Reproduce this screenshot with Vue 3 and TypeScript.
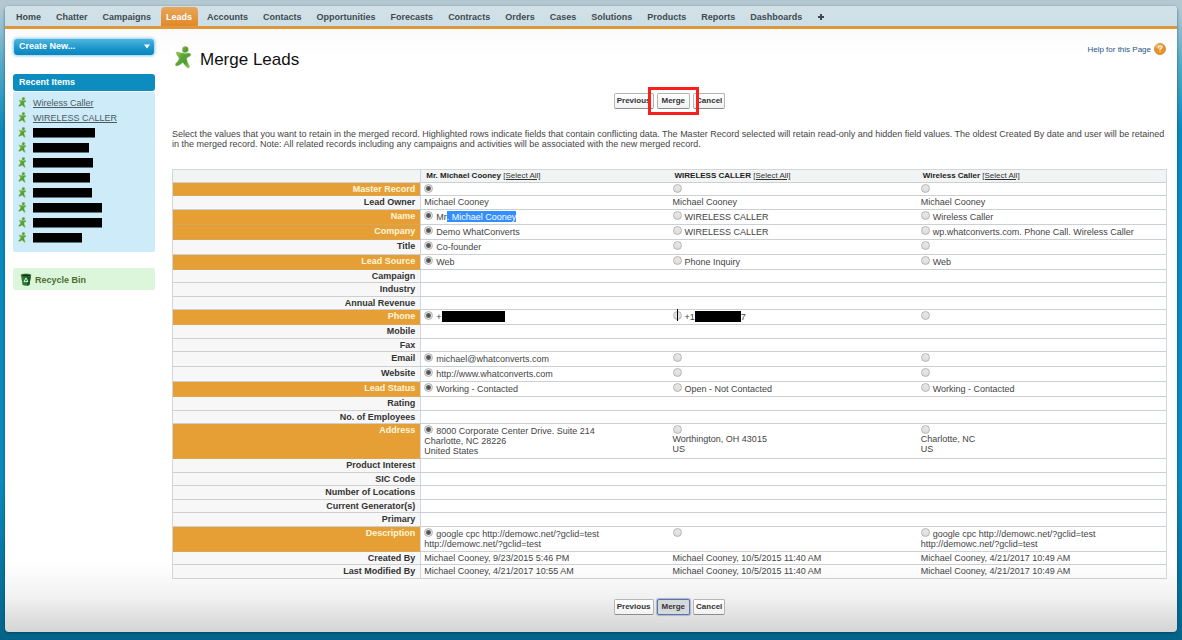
<script setup lang="ts">
import { ref } from 'vue'

type RowSize = 'short' | 'medium' | 'choice' | 'address' | 'description'

interface Cell {
  radio?: boolean
  first?: string
  lines?: string[]
  selected?: string
  barWidth?: number
  tail?: string
  caret?: boolean
}

interface Row {
  label: string
  size: RowSize
  conflict?: boolean
  cells: Cell[]
}

const tabs = [
  'Home', 'Chatter', 'Campaigns', 'Leads', 'Accounts', 'Contacts', 'Opportunities', 'Forecasts',
  'Contracts', 'Orders', 'Cases', 'Solutions', 'Products', 'Reports', 'Dashboards',
]
const activeTab = 'Leads'

const recent = ['Wireless Caller', 'WIRELESS CALLER']
const hiddenRecent = [62, 56, 60, 57, 59, 69, 69, 49]

const records = ['Mr. Michael Cooney', 'WIRELESS CALLER', 'Wireless Caller']

const pick = (first = ''): Cell => ({ radio: true, first })
const plain = (text: string): Cell => ({ lines: [text] })
const blank = (label: string, size: RowSize): Row => ({ label, size, cells: [{}, {}, {}] })

const rows: Row[] = [
  { label: 'Master Record', size: 'short', conflict: true, cells: [pick(), pick(), pick()] },
  { label: 'Lead Owner', size: 'medium', cells: [plain('Michael Cooney'), plain('Michael Cooney'), plain('Michael Cooney')] },
  {
    label: 'Name', size: 'choice', conflict: true,
    cells: [{ radio: true, first: 'Mr', selected: '. Michael Cooney' }, pick('WIRELESS CALLER'), pick('Wireless Caller')],
  },
  {
    label: 'Company', size: 'choice', conflict: true,
    cells: [pick('Demo WhatConverts'), pick('WIRELESS CALLER'), pick('wp.whatconverts.com. Phone Call. Wireless Caller')],
  },
  { label: 'Title', size: 'choice', cells: [pick('Co-founder'), pick(), pick()] },
  { label: 'Lead Source', size: 'choice', conflict: true, cells: [pick('Web'), pick('Phone Inquiry'), pick('Web')] },
  blank('Campaign', 'short'),
  blank('Industry', 'medium'),
  blank('Annual Revenue', 'short'),
  {
    label: 'Phone', size: 'choice', conflict: true,
    cells: [
      { radio: true, first: '+', barWidth: 63 },
      { radio: true, first: '+1', barWidth: 46, tail: '7', caret: true },
      pick(),
    ],
  },
  blank('Mobile', 'medium'),
  blank('Fax', 'short'),
  { label: 'Email', size: 'choice', cells: [pick('michael@whatconverts.com'), pick(), pick()] },
  { label: 'Website', size: 'choice', cells: [pick('http://www.whatconverts.com'), pick(), pick()] },
  {
    label: 'Lead Status', size: 'choice', conflict: true,
    cells: [pick('Working - Contacted'), pick('Open - Not Contacted'), pick('Working - Contacted')],
  },
  blank('Rating', 'medium'),
  blank('No. of Employees', 'short'),
  {
    label: 'Address', size: 'address', conflict: true,
    cells: [
      { radio: true, first: '8000 Corporate Center Drive. Suite 214', lines: ['Charlotte, NC 28226', 'United States'] },
      { radio: true, lines: ['Worthington, OH 43015', 'US'] },
      { radio: true, lines: ['Charlotte, NC', 'US'] },
    ],
  },
  blank('Product Interest', 'medium'),
  blank('SIC Code', 'short'),
  blank('Number of Locations', 'medium'),
  blank('Current Generator(s)', 'short'),
  blank('Primary', 'medium'),
  {
    label: 'Description', size: 'description', conflict: true,
    cells: [
      { radio: true, first: 'google cpc http://demowc.net/?gclid=test', lines: ['http://demowc.net/?gclid=test'] },
      pick(),
      { radio: true, first: 'google cpc http://demowc.net/?gclid=test', lines: ['http://demowc.net/?gclid=test'] },
    ],
  },
  {
    label: 'Created By', size: 'short',
    cells: [plain('Michael Cooney, 9/23/2015 5:46 PM'), plain('Michael Cooney, 10/5/2015 11:40 AM'), plain('Michael Cooney, 4/21/2017 10:49 AM')],
  },
  {
    label: 'Last Modified By', size: 'medium',
    cells: [plain('Michael Cooney, 4/21/2017 10:55 AM'), plain('Michael Cooney, 10/5/2015 11:40 AM'), plain('Michael Cooney, 4/21/2017 10:49 AM')],
  },
]

const choices = ref<Record<string, number>>(
  Object.fromEntries(rows.filter((r) => r.cells[0].radio).map((r) => [r.label, 0])),
)

function selectAll(column: number) {
  for (const key of Object.keys(choices.value)) choices.value[key] = column
}
</script>

<template>
  <svg class="defs" width="0" height="0" aria-hidden="true">
    <defs>
      <linearGradient id="leadGreen" x1="0" y1="0" x2="1" y2="1">
        <stop offset="0" stop-color="#9ccb52" />
        <stop offset="0.35" stop-color="#5fa63a" />
        <stop offset="0.65" stop-color="#4a9a35" />
        <stop offset="1" stop-color="#a3cc62" />
      </linearGradient>
      <symbol id="lead" viewBox="0 0 17 23">
        <path
          d="M2.2 5.8 Q5 7.4 7.4 6.8 Q10.6 8 13.4 7 Q15.6 7 15.9 8.6 Q15.8 10.2 11.6 12 Q11.6 15 14.6 20.6 Q14.2 22.6 12.4 21.8 Q9.6 19.4 7.9 16.6 Q5 19.4 1.4 20 Q-0.2 19.4 0.8 17.4 Q3.6 15.4 4.3 12.2 Q2.6 9.6 1.2 7.4 Q1.2 6 2.2 5.8 Z"
          fill="url(#leadGreen)" stroke="#8fbf5a" stroke-width="0.5"
        />
        <circle cx="10.3" cy="3.6" r="3" fill="url(#leadGreen)" stroke="#7a9f45" stroke-width="0.4" />
      </symbol>
    </defs>
  </svg>

  <div class="page">
    <div class="panel">
      <nav class="tabs">
        <a v-for="tab in tabs" :key="tab" href="#" class="tab" :class="{ active: tab === activeTab }">{{ tab }}</a>
        <a href="#" class="tab" aria-label="All tabs">
          <svg class="plus" viewBox="0 0 8 8"><path d="M3 1h2v2h2v2H5v2H3V5H1V3h2z" fill="#3f4a50" /></svg>
        </a>
      </nav>

      <div class="body">
        <aside class="side">
          <button type="button" class="create">
            <span>Create New...</span>
            <svg class="arrow" viewBox="0 0 6 5"><path d="M0 0.5h6L3 4.5z" fill="#fff" /></svg>
          </button>

          <h2 class="recent-title">Recent Items</h2>
          <ul class="recent">
            <li v-for="name in recent" :key="name">
              <svg class="mini"><use href="#lead" /></svg>
              <a href="#">{{ name }}</a>
            </li>
            <li v-for="(width, i) in hiddenRecent" :key="i">
              <svg class="mini"><use href="#lead" /></svg>
              <a href="#" class="hidden-name" aria-label="Hidden lead" :style="{ width: width + 'px' }"></a>
            </li>
          </ul>

          <a href="#" class="bin">
            <svg class="bin-icon" viewBox="0 0 12 13">
              <path d="M1 2.4 L2.6 12 Q6 13.4 9.4 12 L11 2.4 Z" fill="#2d7a35" />
              <path d="M7.5 3 L11 2.4 L9.4 12 L7.2 12.7 Z" fill="#165522" />
              <ellipse cx="6" cy="2.3" rx="5.4" ry="1.7" fill="#4a8d50" />
              <ellipse cx="6" cy="2.4" rx="4.2" ry="1" fill="#0b3214" />
              <path d="M6 5 L8 8.6 H4 Z" fill="none" stroke="#d8efd6" stroke-width="1" />
            </svg>
            <span>Recycle Bin</span>
          </a>
        </aside>

        <main class="main">
          <header class="head">
            <svg class="lead-icon"><use href="#lead" /></svg>
            <h1>Merge Leads</h1>
            <a href="#" class="help">
              <span>Help for this Page</span>
              <svg class="help-icon" viewBox="0 0 12 12">
                <circle cx="6" cy="6" r="5.5" fill="#e6942a" stroke="#c47a20" stroke-width="0.7" />
                <ellipse cx="5.4" cy="3.6" rx="3.8" ry="2.4" fill="#f3b766" />
                <path d="M4.2 4.6 Q4.3 3 6 3 Q7.8 3.1 7.7 4.6 Q7.6 5.5 6 6.2 V7.2 M6 8.2 V9.3" fill="none" stroke="#fff3dc" stroke-width="1.1" />
              </svg>
            </a>
          </header>

          <div class="actions">
            <button type="button" class="btn">Previous</button>
            <span class="marked"><button type="button" class="btn wide">Merge</button></span>
            <button type="button" class="btn">Cancel</button>
          </div>

          <p class="intro">
            Select the values that you want to retain in the merged record. Highlighted rows indicate fields that contain
            conflicting data. The Master Record selected will retain read-only and hidden field values. The oldest Created By
            date and user will be retained in the merged record. Note: All related records including any campaigns and
            activities will be associated with the new merged record.
          </p>

          <table class="grid">
            <thead>
              <tr class="short">
                <td></td>
                <th v-for="(record, i) in records" :key="record" scope="col">
                  {{ record }} <a href="#" @click.prevent="selectAll(i)">[Select All]</a>
                </th>
              </tr>
            </thead>
            <tbody>
              <tr v-for="row in rows" :key="row.label" :class="[row.size, { conflict: row.conflict }]">
                <th scope="row">{{ row.label }}</th>
                <td v-for="(cell, i) in row.cells" :key="i">
                  <label v-if="cell.radio" class="choice-line">
                    <input
                      v-model="choices[row.label]"
                      type="radio"
                      :name="row.label"
                      :value="i"
                      :aria-label="row.label + ', ' + records[i]"
                    />
                    <span v-if="cell.first" class="value">{{ cell.first }}<mark v-if="cell.selected">{{ cell.selected }}</mark></span>
                    <span v-if="cell.barWidth" class="bar" :style="{ width: cell.barWidth + 'px' }"></span>
                    <span v-if="cell.tail" class="tail">{{ cell.tail }}</span>
                    <i v-if="cell.caret" class="caret"></i>
                  </label>
                  <div v-for="line in cell.lines" :key="line">{{ line }}</div>
                </td>
              </tr>
            </tbody>
          </table>

          <div class="actions bottom">
            <button type="button" class="btn">Previous</button>
            <button type="button" class="btn wide focused">Merge</button>
            <button type="button" class="btn">Cancel</button>
          </div>
        </main>
      </div>
    </div>
  </div>
</template>

<style>
body {
  margin: 0;
}
</style>

<style scoped>
* {
  box-sizing: border-box;
}

.defs {
  position: absolute;
}

.page {
  display: flex;
  min-height: 100vh;
  padding: 6px 5px 8px;
  font: 9px/10px "Liberation Sans", Arial, sans-serif;
  color: #444;
  background: linear-gradient(#b4c8d1 0, #b0c8d2 10px, #5aaccb 60px, #0b8abd 130px, #0b8abd 480px, #056389 100%);
}

.panel {
  display: flex;
  flex-direction: column;
  flex: 1;
  min-width: 0;
  border-radius: 4px;
  background: linear-gradient(#fafafa 20px, #fff 50px, #fff calc(100% - 70px), #f2f2f2 calc(100% - 36px), #d4d4d4 100%);
  box-shadow: 0 1px 3px rgba(0, 50, 80, 0.6);
}

.tabs {
  display: flex;
  align-items: flex-end;
  height: 23px;
  padding-left: 4px;
  border-bottom: 3px solid #e2963a;
  border-radius: 4px 4px 0 0;
  background: linear-gradient(#d3e1e6, #cadfe7);
}

.tab {
  display: flex;
  align-items: center;
  height: 19px;
  margin: 0 2px;
  padding: 0 6px 0 5px;
  border-radius: 4px 4px 0 0;
  font-weight: bold;
  color: #3f4a50;
  text-decoration: none;
}

.tab.active {
  color: #fff;
  background: linear-gradient(#e8a55c, #e08a26);
}

.plus {
  width: 8px;
  height: 8px;
}

.body {
  display: flex;
  flex: 1;
  gap: 17px;
  padding: 9px 10px 0 8px;
}

.side {
  display: flex;
  flex-direction: column;
  flex: none;
  width: 142px;
}

.create {
  display: flex;
  align-items: center;
  justify-content: space-between;
  height: 18px;
  padding: 0 4px 2px 5px;
  border: 1px solid #b5e0f2;
  border-radius: 4px;
  font: bold 9px/10px "Liberation Sans", Arial, sans-serif;
  color: #fff;
  background: linear-gradient(#4fb5dd, #1a94cb 60%, #0b85bd);
  box-shadow: 0 0 2px 1px #c4e6f4;
}

.arrow {
  width: 6px;
  height: 5px;
}

.recent-title {
  margin: 18px 0 1px;
  padding: 3px 6px 4px;
  border-radius: 3px;
  font: bold 9px/10px "Liberation Sans", Arial, sans-serif;
  color: #fff;
  background: #0d8dbf;
}

.recent {
  margin: 0;
  padding: 3px 5px 7px;
  border-radius: 2px;
  list-style: none;
  background: #cdebf8;
}

.recent li {
  display: flex;
  align-items: center;
  gap: 6px;
  height: 15px;
}

.recent a {
  color: #4b5961;
}

.mini {
  width: 9px;
  height: 11px;
}

.recent .hidden-name {
  height: 10px;
  border-bottom: 1px solid #5b7480;
  background: #000 padding-box;
}

.bin {
  display: flex;
  align-items: center;
  gap: 3px;
  height: 22px;
  margin-top: 16px;
  padding: 1px 0 0 7px;
  border-radius: 2px;
  font-weight: bold;
  color: #4c6b32;
  text-decoration: none;
  background: #dcf6dc;
}

.bin-icon {
  width: 12px;
  height: 13px;
}

.main {
  flex: 1;
  min-width: 0;
}

.head {
  display: flex;
  align-items: center;
  height: 43px;
  padding-left: 3px;
}

.lead-icon {
  width: 17px;
  height: 23px;
  margin-bottom: 4px;
}

.head h1 {
  margin: 0 0 0 8px;
  font: normal 17px/20px "Liberation Sans", Arial, sans-serif;
  color: #111;
}

.help {
  display: flex;
  align-items: center;
  gap: 3px;
  align-self: flex-start;
  margin: 5px 1px 0 auto;
  font-size: 8px;
  color: #1f5582;
  text-decoration: none;
}

.help span {
  padding-top: 2px;
}

.help-icon {
  width: 12px;
  height: 12px;
}

.actions {
  display: flex;
  justify-content: center;
  gap: 3px;
  margin-top: 12px;
}

.actions.bottom {
  margin-top: 20px;
  padding-bottom: 16px;
}

.btn {
  height: 16px;
  padding: 0 2px;
  border: 1px solid #b5b5b5;
  border-bottom-color: #8c8c8c;
  border-radius: 2px;
  font: bold 8px/10px "Liberation Sans", Arial, sans-serif;
  color: #333;
  background: linear-gradient(#fff, #f2f2f2);
}

.btn.wide {
  padding: 0 4px;
}

.btn.focused {
  border-color: #5a74a5;
  background: #d6d8dc;
  box-shadow: 0 0 1px 1px #a9b6cf;
}

.marked {
  position: relative;
  display: flex;
}

.marked::after {
  content: "";
  position: absolute;
  inset: -6px -9px;
  border: 3px solid #f8201c;
  pointer-events: none;
}

.intro {
  margin: 20px 0;
}

.grid {
  width: 100%;
  table-layout: fixed;
  border-collapse: separate;
  border-spacing: 0;
  border: 1px solid #d0d7da;
  border-bottom: 0;
}

.grid th,
.grid td {
  padding: 1px 3px 0;
  border-bottom: 1px solid #ccd0d2;
  text-align: left;
  vertical-align: top;
}

.grid td {
  white-space: nowrap;
}

.grid tr > :first-child {
  border-right: 1px solid #ccd6e2;
}

.grid thead th,
.grid thead td {
  background: #f2f3f3;
}

.grid thead th {
  padding-left: 5px;
  font-size: 8px;
  color: #222;
}

.grid thead a {
  font-weight: normal;
  color: #333;
}

.grid tbody th {
  padding-right: 5px;
  text-align: right;
  color: #333;
  background: #f7f7f7;
}

.grid .conflict th {
  border-bottom-color: #d9a656;
  color: #fff6dc;
  background: #e69f35;
}

.short {
  height: 13px;
}

.medium {
  height: 14px;
}

.choice {
  height: 15px;
}

.address {
  height: 35px;
}

.description {
  height: 25px;
}

.choice-line {
  position: relative;
  display: flex;
  align-items: flex-start;
}

.choice-line input {
  flex: none;
  appearance: none;
  width: 9px;
  height: 9px;
  margin: 0;
  border: 1px solid #b4b4b4;
  border-radius: 50%;
  background: linear-gradient(#e9e9e9, #dcdcdc);
}

.choice-line input:checked {
  background: radial-gradient(circle, #555 0 1px, #666 2px, #e4e4e4 3px);
}

.value {
  margin: 1px 0 0 3px;
}

.value mark {
  display: inline-block;
  height: 11px;
  margin-top: -1px;
  padding-top: 1px;
  color: #fff;
  background: #338fff;
}

.bar {
  height: 11px;
  background: #000;
}

.tail {
  margin-top: 1px;
}

.caret {
  position: absolute;
  top: -2px;
  left: 4px;
  width: 1px;
  height: 12px;
  background: #000;
}
</style>
